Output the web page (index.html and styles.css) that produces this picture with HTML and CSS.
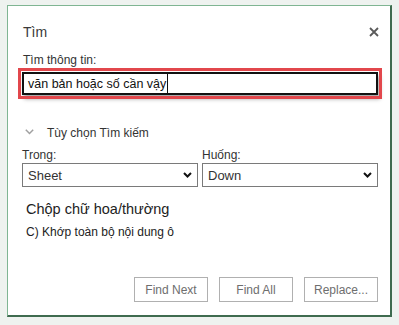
FILE: index.html
```html
<!DOCTYPE html>
<html lang="vi">
<head>
    <meta charset="UTF-8">
    <meta name="viewport" content="width=device-width, initial-scale=1.0">
    <title>Tìm</title>
    <link rel="stylesheet" href="styles.css">
</head>
<body>
    <div class="dialog">
        <!-- tiêu đề -->
        <div class="header">
            <span class="title">Tìm</span>
            <svg class="close" width="10" height="10" viewBox="0 0 10 10">
                <path d="M1 1 L9 9 M9 1 L1 9" stroke="#5a5a5a" stroke-width="1.8" fill="none"/>
            </svg>
        </div>

        <div class="label">Tìm thông tin:</div>
        <div class="search-box">
            <span class="search-text">văn bản hoặc số cần vậy</span><span class="caret"></span>
        </div>

        <div class="options">
            <svg class="options-arrow" width="9" height="6" viewBox="0 0 9 6">
                <path d="M0.8 0.8 L4.5 4.5 L8.2 0.8" stroke="#a0a0a0" stroke-width="1.5" fill="none"/>
            </svg>
            <span>Tùy chọn Tìm kiếm</span>
        </div>

        <div class="fields">
            <div class="field">
                <div class="label">Trong:</div>
                <div class="select">
                    <span>Sheet</span>
                    <svg width="9" height="6" viewBox="0 0 9 6">
                        <path d="M1 1 L4.5 4.5 L8 1" stroke="#111" stroke-width="2" fill="none"/>
                    </svg>
                </div>
            </div>
            <div class="field">
                <div class="label">Huống:</div>
                <div class="select">
                    <span>Down</span>
                    <svg width="9" height="6" viewBox="0 0 9 6">
                        <path d="M1 1 L4.5 4.5 L8 1" stroke="#111" stroke-width="2" fill="none"/>
                    </svg>
                </div>
            </div>
        </div>

        <div class="match-case">Chộp chữ hoa/thường</div>
        <div class="match-all">C) Khớp toàn bộ nội dung ô</div>

        <div class="buttons">
            <button>Find Next</button>
            <button>Find All</button>
            <button>Replace...</button>
        </div>
    </div>
</body>
</html>
```

FILE: styles.css
```css
/* hộp thoại Tìm */
body {
    margin: 0;
    background-color: #eef2ef;
    font-family: 'Liberation Sans', Arial, sans-serif;
    color: #222;
}

.dialog {
    box-sizing: border-box;
    width: 385px;
    height: 312px;
    margin: 5px 0 0 7px;
    padding: 0 12px 13px 14px;
    background-color: #ffffff;
    border: 1px solid #7fb592;
    border-right: 2px solid #3f6b4f;
    border-bottom: 2px solid #3f6b4f;
    display: flex;
    flex-direction: column;
}

.header {
    display: flex;
    justify-content: space-between;
    align-items: center;
    height: 16px;
    margin-top: 18px;
}

.title {
    font-size: 14px;
    margin-left: 1px;
    color: #3a3a3a;
}

.close {
    margin-right: -1px;
}

.label {
    font-size: 12px;
    line-height: 14px;
    color: #333;
}

.header + .label {
    margin-top: 13px;
    margin-left: 1px;
}

.search-box {
    box-sizing: border-box;
    height: 23px;
    margin-top: 5px;
    padding-left: 4px;
    border: 2px solid #111;
    outline: 3px solid #e2474c;
    outline-offset: 1px;
    box-shadow: 2px 4px 4px rgba(0, 0, 0, 0.35);
    display: flex;
    align-items: center;
    font-size: 12.5px;
    color: #111;
}

.caret {
    width: 1px;
    height: 19px;
    margin-left: 1px;
    background-color: #111;
}

.options {
    display: flex;
    align-items: center;
    height: 16px;
    margin-top: 30px;
    font-size: 12px;
    color: #333;
}

.options-arrow {
    margin: 0 13px 2px 3px;
}

.fields {
    display: grid;
    grid-template-columns: 1fr 1fr;
    gap: 4px;
    margin-top: 7px;
}

.select {
    box-sizing: border-box;
    height: 24px;
    margin-top: 1px;
    padding: 0 5px 0 5px;
    border: 1px solid #7a7a7a;
    display: flex;
    justify-content: space-between;
    align-items: center;
    font-size: 13px;
    color: #333;
}

.match-case {
    margin: 13px 0 0 4px;
    font-size: 14.5px;
    line-height: 19px;
    color: #222;
}

.match-all {
    margin: 6px 0 0 4px;
    font-size: 12px;
    line-height: 15px;
    color: #222;
}

.buttons {
    margin-top: auto;
    display: flex;
    justify-content: flex-end;
    gap: 11px;
}

button {
    width: 74px;
    height: 25px;
    padding: 0;
    background-color: #ffffff;
    border: 1px solid #b0b0b0;
    color: #6e6e6e;
    font-family: 'Liberation Sans', Arial, sans-serif;
    font-size: 12px;
}
```
